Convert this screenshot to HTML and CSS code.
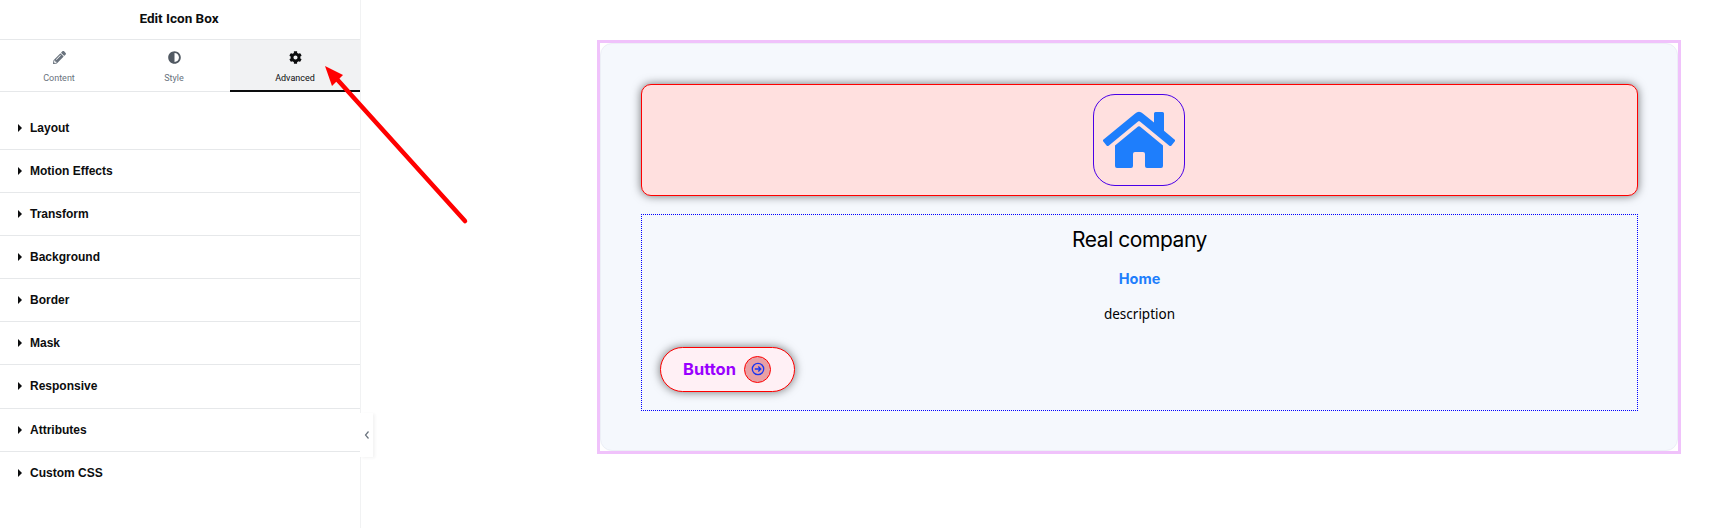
FILE: index.html
```html
<!DOCTYPE html>
<html lang="en">
<head>
    <meta charset="UTF-8">
    <meta name="viewport" content="width=device-width, initial-scale=1.0">
    <title>Edit Icon Box</title>
    <link rel="stylesheet" href="styles.css">
</head>
<body>
    <aside class="sidebar">
        <div class="sidebar-title">Edit Icon Box</div>

        <div class="tabs">
            <div class="tab">
                <svg class="tab-icon tab-icon-pencil" viewBox="0 0 512 512"><path d="M497.9 142.1l-46.1 46.1c-4.7 4.7-12.3 4.7-17 0l-111-111c-4.7-4.7-4.7-12.3 0-17l46.1-46.1c18.7-18.7 49.1-18.7 67.9 0l60.1 60.1c18.8 18.7 18.8 49.1 0 67.9zM284.2 99.8L21.6 362.4.4 483.9c-2.9 16.4 11.4 30.6 27.8 27.8l121.5-21.3 262.6-262.6c4.7-4.7 4.7-12.3 0-17l-111-111c-4.8-4.7-12.4-4.7-17.1 0zM124.100 339.900c-5.500-5.500-5.500-14.300 0-19.800l154-154c5.500-5.500 14.300-5.500 19.800 0s5.500 14.300 0 19.800l-154 154c-5.500 5.500-14.300 5.500-19.800 0zM88 424h48v36.300l-64.500 11.300-31.100-31.100L51.700 376H88v48z"/></svg>
                <span>Content</span>
            </div>
            <div class="tab">
                <svg class="tab-icon" viewBox="0 0 512 512"><path d="M256 8C119 8 8 119 8 256s111 248 248 248 248-111 248-248S393 8 256 8zm0 424V80c97.200 0 176 78.800 176 176s-78.800 176-176 176z"/></svg>
                <span>Style</span>
            </div>
            <div class="tab tab-active">
                <svg class="tab-icon" viewBox="0 0 512 512"><path d="M487.4 315.7l-42.600-24.600c4.300-23.200 4.300-47 0-70.200l42.600-24.600c4.900-2.800 7.100-8.600 5.500-14-11.100-35.600-30-67.800-54.700-94.600-3.800-4.100-10-5.100-14.800-2.300L380.800 110c-17.900-15.400-38.500-27.300-60.800-35.100V25.800c0-5.600-3.900-10.500-9.400-11.700-36.700-8.200-74.300-7.800-109.200 0-5.500 1.200-9.400 6.100-9.400 11.700V75c-22.200 7.900-42.800 19.800-60.800 35.100L88.700 85.500c-4.900-2.800-11-1.900-14.800 2.300-24.700 26.700-43.600 58.900-54.700 94.600-1.700 5.400.6 11.200 5.500 14L67.300 221c-4.300 23.200-4.300 47 0 70.200l-42.600 24.600c-4.900 2.800-7.100 8.600-5.500 14 11.100 35.600 30 67.800 54.700 94.600 3.800 4.100 10 5.100 14.800 2.300l42.600-24.600c17.900 15.400 38.500 27.300 60.800 35.100v49.200c0 5.600 3.900 10.500 9.400 11.700 36.700 8.200 74.300 7.800 109.200 0 5.500-1.200 9.400-6.100 9.400-11.700v-49.200c22.200-7.900 42.800-19.800 60.800-35.100l42.600 24.600c4.900 2.800 11 1.900 14.800-2.300 24.700-26.700 43.600-58.900 54.700-94.600 1.500-5.500-.7-11.300-5.600-14.100zM256 336c-44.100 0-80-35.900-80-80s35.900-80 80-80 80 35.900 80 80-35.900 80-80 80z"/></svg>
                <span>Advanced</span>
            </div>
        </div>

        <div class="sections">
            <div class="section">Layout</div>
            <div class="section">Motion Effects</div>
            <div class="section">Transform</div>
            <div class="section">Background</div>
            <div class="section">Border</div>
            <div class="section">Mask</div>
            <div class="section section-tall">Responsive</div>
            <div class="section">Attributes</div>
            <div class="section section-last">Custom CSS</div>
        </div>

        <div class="collapse-tab">
            <svg viewBox="0 0 6 10"><path d="M4.500 1.500 1.500 5l3 3.500"/></svg>
        </div>
    </aside>

    <main class="canvas">
        <div class="widget">
            <div class="icon-wrap">
                <div class="icon-box">
                    <svg class="home-icon" viewBox="0 0 576 512"><path d="M280.370 148.260L96 300.110V464a16 16 0 0 0 16 16l112.060-.29a16 16 0 0 0 15.920-16V368a16 16 0 0 1 16-16h64a16 16 0 0 1 16 16v95.640a16 16 0 0 0 16 16.050L464 480a16 16 0 0 0 16-16V300L295.670 148.260a12.190 12.190 0 0 0-15.300 0zM571.600 251.470L488 182.560V44.050a12 12 0 0 0-12-12h-56a12 12 0 0 0-12 12v72.610L318.470 43a48 48 0 0 0-61 0L4.340 251.470a12 12 0 0 0-1.600 16.900l25.500 31A12 12 0 0 0 45.150 301l235.220-193.740a12.190 12.190 0 0 1 15.300 0L530.900 301a12 12 0 0 0 16.900-1.600l25.500-31a12 12 0 0 0-1.700-16.930z"/></svg>
                </div>
            </div>

            <div class="content">
                <h2 class="company">Real company</h2>
                <div class="home-link">Home</div>
                <p class="description">description</p>
                <a class="button">
                    Button
                    <span class="button-icon">
                        <svg viewBox="0 0 14 14"><circle cx="7" cy="7" r="5.700"/><path d="M3.800 7h6M7.300 4.500 9.800 7 7.300 9.500"/></svg>
                    </span>
                </a>
            </div>
        </div>
    </main>

    <svg class="red-arrow" viewBox="0 0 480 240">
        <path class="red-arrow-line" d="M465 221 335 77"/>
        <path class="red-arrow-head" d="M325 66 343 75 332 86z"/>
    </svg>
</body>
</html>
```

FILE: styles.css
```css
* {
    margin: 0;
    padding: 0;
    box-sizing: border-box;
}

body {
    width: 1717px;
    height: 528px;
    display: flex;
    align-items: flex-start;
    background: white;
    overflow: hidden;
    position: relative;
    font-family: Roboto, 'Liberation Sans', sans-serif;
}

/* левая панель */
.sidebar {
    width: 361px;
    height: 528px;
    flex-shrink: 0;
    border-right: 1px solid #f1f2f3;
    position: relative;
}

.sidebar-title {
    height: 40px;
    display: flex;
    align-items: center;
    justify-content: center;
    padding: 0 2px 3px 0;
    border-bottom: 1px solid #e6e8ea;
    font-size: 13.500px;
    font-weight: 700;
    color: #0c0d0e;
}

.tabs {
    height: 52px;
    display: grid;
    grid-template-columns: 118px 112px 130px;
    border-bottom: 1px solid #e6e8ea;
}

.tab {
    display: flex;
    flex-direction: column;
    align-items: center;
    gap: 8px;
    padding-top: 11px;
    font-size: 9px;
    line-height: 12px;
    color: #69727d;
}

.tab-icon {
    width: 13px;
    height: 13px;
    fill: #515962;
}

.tab-icon-pencil {
    fill: #69727d;
}

.tab-active {
    background: #f1f2f3;
    color: #0c0d0e;
    border-bottom: 2px solid #0c0d0e;
    height: 52px;
}

.tab-active .tab-icon {
    fill: #0c0d0e;
}

.sections {
    padding-top: 15px;
}

.section {
    height: 43px;
    display: flex;
    align-items: center;
    padding: 0 0 1px 30px;
    border-bottom: 1px solid #e6e8ea;
    font-family: 'Liberation Sans', sans-serif;
    font-size: 12px;
    font-weight: 700;
    color: #0c0d0e;
    position: relative;
}

.section::before {
    content: '';
    position: absolute;
    left: 18px;
    top: 50%;
    margin-top: -4.500px;
    border-left: 4.500px solid #0c0d0e;
    border-top: 4px solid transparent;
    border-bottom: 4px solid transparent;
}

.section-tall {
    height: 44px;
}

.section-last {
    border-bottom: none;
}

.collapse-tab {
    position: absolute;
    left: 360px;
    top: 413px;
    width: 13px;
    height: 44px;
    background: white;
    box-shadow: 2px 1px 3px rgba(0, 0, 0, 0.05);
    display: flex;
    align-items: center;
    justify-content: center;
}

.collapse-tab svg {
    width: 6px;
    height: 10px;
    fill: none;
    stroke: #69727d;
    stroke-width: 1.200;
}

/* холст с виджетом */
.canvas {
    margin-left: 236px;
    margin-top: 40px;
    width: 1084px;
    height: 414px;
    border: 3px solid #f0c2fb;
}

.widget {
    height: 100%;
    background: #f5f8fd;
    border: 1px solid #eceff6;
    border-radius: 12px;
    padding: 40px 39px 39px 40px;
    display: flex;
    flex-direction: column;
    gap: 18px;
}

.icon-wrap {
    height: 112px;
    display: flex;
    align-items: center;
    justify-content: center;
    padding-right: 2px;
    background: #ffe0df;
    border: 1px solid #f00;
    border-radius: 10px;
    box-shadow: 0 0 10px rgba(0, 0, 0, 0.55);
}

.icon-box {
    width: 92px;
    height: 92px;
    display: flex;
    align-items: center;
    justify-content: center;
    border: 1px solid #4a00e8;
    border-radius: 22px;
}

.home-icon {
    width: 72px;
    height: 64px;
    fill: #1e7efc;
}

.content {
    flex: 1;
    border: 1px dotted #00f;
    padding: 0 18px;
    text-align: center;
}

.company {
    margin-top: 11px;
    font-family: Inter, sans-serif;
    font-size: 21px;
    font-weight: 400;
    line-height: 28px;
    letter-spacing: -0.450px;
    color: #000;
}

.home-link {
    margin-top: 16px;
    font-family: Inter, sans-serif;
    font-size: 14.500px;
    font-weight: 700;
    line-height: 18px;
    color: #1e7efc;
}

.description {
    margin-top: 16px;
    font-family: 'Noto Sans', sans-serif;
    font-size: 13.500px;
    line-height: 20px;
    color: #000;
}

.button {
    width: 135px;
    height: 45px;
    margin-top: 23px;
    display: flex;
    align-items: center;
    justify-content: space-between;
    padding: 0 23px 1px 22px;
    background: #fff0f5;
    border: 1.500px solid #f00;
    border-radius: 23px;
    box-shadow: 0 0 10px rgba(0, 0, 0, 0.55);
    font-family: Inter, sans-serif;
    font-size: 16.500px;
    font-weight: 700;
    color: #9900ff;
}

.button-icon {
    width: 27px;
    height: 27px;
    display: flex;
    align-items: center;
    justify-content: center;
    background: #e8a0a5;
    border: 1px solid #f00;
    border-radius: 50%;
}

.button-icon svg {
    width: 14px;
    height: 14px;
    fill: none;
    stroke: #1a35f0;
    stroke-width: 1.300;
}

/* стрелка поверх всего */
.red-arrow {
    position: absolute;
    left: 0;
    top: 0;
    width: 480px;
    height: 240px;
    pointer-events: none;
}

.red-arrow-line {
    fill: none;
    stroke: #f00;
    stroke-width: 4.500;
    stroke-linecap: round;
}

.red-arrow-head {
    fill: #f00;
}
```
